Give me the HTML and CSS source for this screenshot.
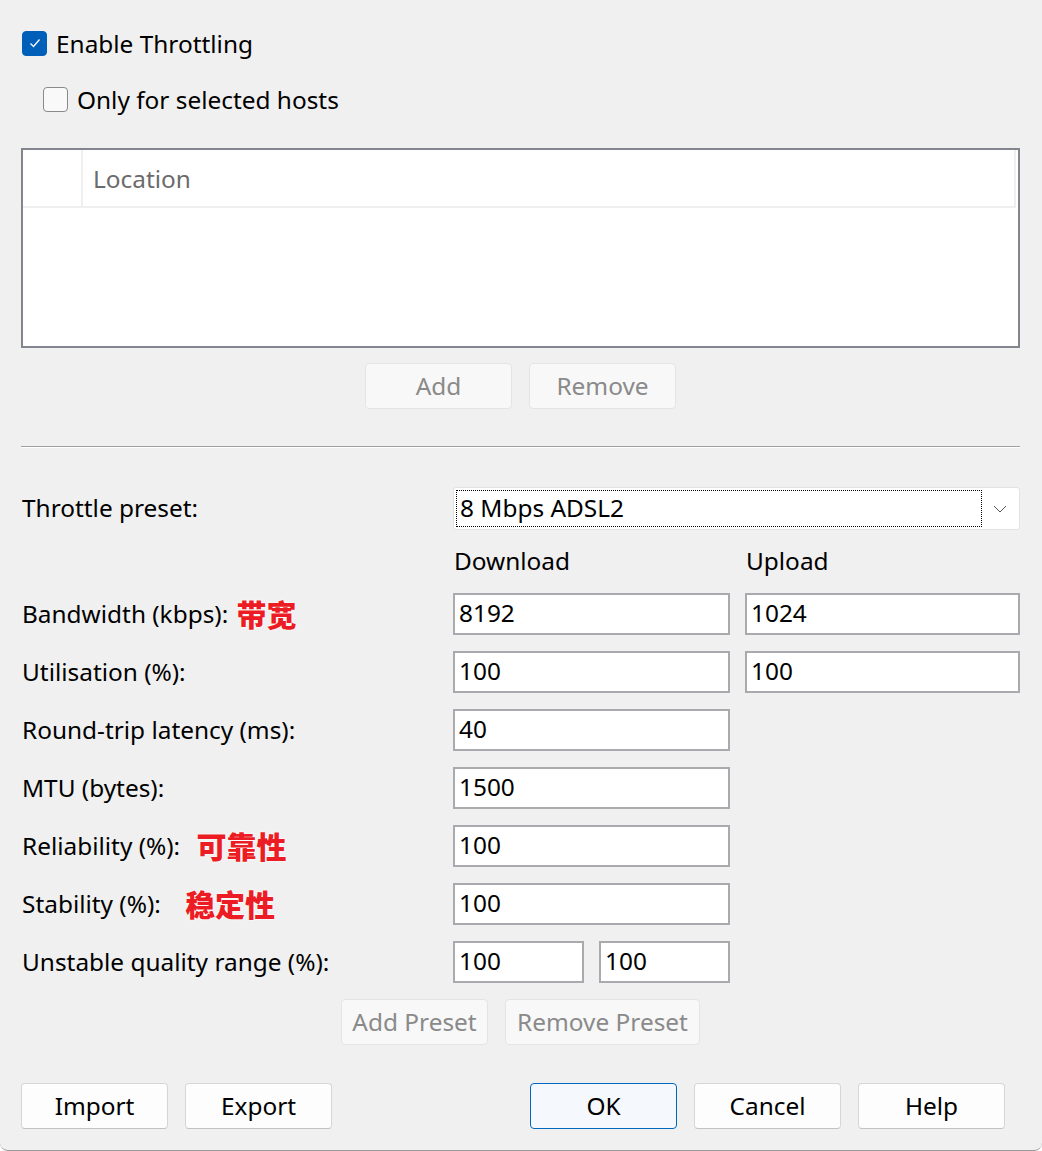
FILE: index.html
```html
<!DOCTYPE html>
<html lang="en">
<head>
    <meta charset="UTF-8">
    <meta name="viewport" content="width=device-width, initial-scale=1.0">
    <title>Throttling</title>
    <link rel="stylesheet" href="styles.css">
</head>
<body>
    <div class="dialog">
        <label class="check">
            <span class="box box-on">
                <svg width="14" height="14" viewBox="0 0 14 14"><path d="M2.5 7.5 L5.5 10.5 L11.5 3.5" fill="none" stroke="#fff" stroke-width="1.3"/></svg>
            </span>
            <span>Enable Throttling</span>
        </label>
        <label class="check check-sub">
            <span class="box"></span>
            <span>Only for selected hosts</span>
        </label>

        <div class="hosts">
            <div class="hosts-head">
                <div class="col-mark"></div>
                <div class="col-loc">Location</div>
            </div>
        </div>
        <div class="btn-row">
            <button class="btn" disabled>Add</button>
            <button class="btn" disabled>Remove</button>
        </div>

        <div class="sep"></div>

        <div class="form">
            <div class="label">Throttle preset:</div>
            <div class="combo">
                <span class="combo-text">8 Mbps ADSL2</span>
                <svg width="14" height="8" viewBox="0 0 14 8"><path d="M1 1 L7 7 L13 1" fill="none" stroke="#555" stroke-width="1"/></svg>
            </div>

            <div></div>
            <div class="head">Download</div>
            <div class="head">Upload</div>

            <div class="label">Bandwidth (kbps): <span class="note">带宽</span></div>
            <input class="field" value="8192">
            <input class="field" value="1024">

            <div class="label">Utilisation (%):</div>
            <input class="field" value="100">
            <input class="field" value="100">

            <div class="label">Round-trip latency (ms):</div>
            <input class="field" value="40">
            <div></div>

            <div class="label">MTU (bytes):</div>
            <input class="field" value="1500">
            <div></div>

            <div class="label">Reliability (%): <span class="note note-mid">可靠性</span></div>
            <input class="field" value="100">
            <div></div>

            <div class="label">Stability (%): <span class="note note-far">稳定性</span></div>
            <input class="field" value="100">
            <div></div>

            <div class="label">Unstable quality range (%):</div>
            <div class="pair">
                <input class="field" value="100">
                <input class="field" value="100">
            </div>
            <div></div>
        </div>

        <div class="btn-row preset-row">
            <button class="btn" disabled>Add Preset</button>
            <button class="btn btn-wide" disabled>Remove Preset</button>
        </div>

        <div class="footer">
            <button class="btn">Import</button>
            <button class="btn">Export</button>
            <div class="spacer"></div>
            <button class="btn btn-default">OK</button>
            <button class="btn">Cancel</button>
            <button class="btn">Help</button>
        </div>
    </div>
</body>
</html>
```

FILE: styles.css
```css
body {
    margin: 0;
    background: #ffffff;
    font-family: "Noto Sans", "Open Sans", sans-serif;
    font-size: 24.4px;
    color: #000;
}
.dialog {
    height: 1151px;
    box-sizing: border-box;
    background: #f0f0f0;
    padding: 30px 22px 0 21px;
    border-radius: 0 0 8px 8px;
    border-bottom: 1px solid #9a9a9a;
}

/* checkboxes */
.check {
    display: flex;
    align-items: center;
    gap: 9px;
    height: 26px;
    padding-left: 1px;
}
.check-sub {
    margin-top: 30px;
    padding-left: 22px;
}
.box {
    width: 25px;
    height: 25px;
    box-sizing: border-box;
    border: 1px solid #8a8a8a;
    border-radius: 4px;
    background: #f9f9f9;
    display: flex;
    align-items: center;
    justify-content: center;
}
.box-on {
    background: #005fb8;
    border-color: #005fb8;
}

/* hosts list */
.hosts {
    margin-top: 36px;
    height: 200px;
    box-sizing: border-box;
    border: 2px solid #82858d;
    background: #fff;
}
.hosts-head {
    display: flex;
    height: 56px;
    border-bottom: 2px solid #efefef;
    margin-right: 2px;
}
.col-mark {
    width: 58px;
    border-right: 2px solid #efefef;
}
.col-loc {
    flex: 1;
    padding-left: 10px;
    display: flex;
    align-items: center;
    color: #6b6b6b;
    border-right: 2px solid #efefef;
}

/* buttons */
.btn-row {
    display: flex;
    justify-content: center;
    gap: 17px;
    margin-top: 15px;
}
.btn {
    width: 147px;
    height: 46px;
    box-sizing: border-box;
    font-family: inherit;
    font-size: 24.4px;
    color: #000;
    background: #fdfdfd;
    border: 1px solid #d6d6d6;
    border-bottom-color: #c2c2c2;
    border-radius: 4px;
    padding: 0 0 2px;
}
.btn:disabled {
    color: #8a8a8a;
    background: #f8f8f8;
    border-color: #e4e4e4;
}
.btn-wide {
    width: 195px;
}
.btn-default {
    background: #f5f9fd;
    border: 1px solid #0067c0;
}

.sep {
    margin-top: 37px;
    border-top: 1px solid #a0a0a0;
    border-bottom: 1px solid #fff;
}

/* preset form */
.form {
    margin-top: 39px;
    display: grid;
    grid-template-columns: 417px 277px 275px;
    column-gap: 15px;
    row-gap: 16px;
    grid-auto-rows: 42px;
    grid-template-rows: 43px 31px;
}
.label {
    display: flex;
    align-items: center;
    padding-left: 1px;
    padding-bottom: 2px;
    white-space: pre;
}
.head {
    display: flex;
    align-items: center;
    padding-left: 1px;
    padding-bottom: 3px;
}
.combo {
    grid-column: 2 / 4;
    display: flex;
    align-items: center;
    justify-content: space-between;
    background: #fff;
    border: 1px solid #e2e2e2;
    border-radius: 3px;
    padding: 2px 12px 2px 2px;
}
.combo-text {
    flex: 0 0 526px;
    height: 100%;
    box-sizing: border-box;
    border: 1px dotted #000;
    display: flex;
    align-items: center;
    padding-left: 3px;
    padding-bottom: 3px;
}
.field {
    width: 100%;
    height: 42px;
    box-sizing: border-box;
    border: 2px solid #aaaaae;
    background: #fff;
    font-family: inherit;
    font-size: 24.4px;
    padding: 0 4px 3px;
    margin: 0;
    color: #000;
}
.pair {
    display: flex;
    gap: 15px;
}
.note {
    font-family: "Noto Sans CJK SC", sans-serif;
    font-weight: 900;
    font-size: 30px;
    color: #ec1c24;
    margin-left: 2px;
    text-shadow: 0 0 2px #fff, 0 0 2px #fff;
}
.note-mid {
    margin-left: 10px;
}
.note-far {
    margin-left: 18px;
}

.preset-row {
    margin-top: 16px;
}

.footer {
    display: flex;
    gap: 17px;
    margin-top: 38px;
    padding-right: 15px;
}
.spacer {
    flex: 1;
}
```
